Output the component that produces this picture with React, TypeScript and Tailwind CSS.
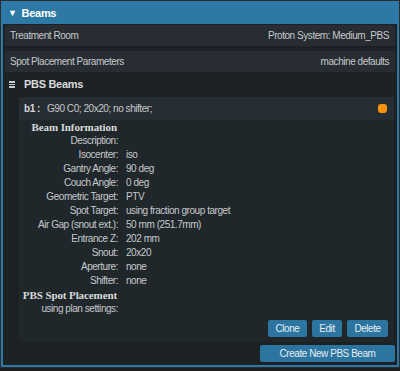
import React from "react";

const rows: [string, string][] = [
  ["Description:", ""],
  ["Isocenter:", "iso"],
  ["Gantry Angle:", "90 deg"],
  ["Couch Angle:", "0 deg"],
  ["Geometric Target:", "PTV"],
  ["Spot Target:", "using fraction group target"],
  ["Air Gap (snout ext.):", "50 mm (251.7mm)"],
  ["Entrance Z:", "202 mm"],
  ["Snout:", "20x20"],
  ["Aperture:", "none"],
  ["Shifter:", "none"],
];

const serif = { fontFamily: '"Liberation Serif", "Times New Roman", serif' };

function Heading({ children }: { children: React.ReactNode }) {
  return (
    <div className="w-[87px] flex justify-end h-[14px] leading-[14px]">
      <span
        className="whitespace-nowrap font-bold text-[11px] tracking-[-0.1px] text-[#d8dadb]"
        style={serif}
      >
        {children}
      </span>
    </div>
  );
}

export default function App() {
  return (
    <div
      className="w-[400px] h-[371px] bg-[#1c1e20] text-[10px] tracking-[-0.45px] text-[#c6c9cb]"
      style={{ fontFamily: '"Liberation Sans", Arial, sans-serif' }}
    >
      <div className="w-[400px] h-[368px] border border-[#2a2d30]">
        <div className="h-full border-2 border-[#2c79a6] bg-[#1e2124] flex flex-col">
          <div className="h-[21px] bg-[#2c79a6] flex items-center pl-[5px] text-white font-bold text-[11px] tracking-[-0.3px] shrink-0">
            <span className="text-[9px] mr-[5px]">▼</span>Beams
          </div>
          <div className="px-[2px] pt-[1px] flex flex-col gap-[5px]">
            <div className="h-[21px] bg-[#272d32] rounded-[2px] flex items-center justify-between pl-[5px] pr-[6px]">
              <span>Treatment Room</span>
              <span>Proton System: Medium_PBS</span>
            </div>
            <div className="h-[21px] bg-[#272d32] rounded-[2px] flex items-center justify-between pl-[5px] pr-[6px]">
              <span>Spot Placement Parameters</span>
              <span>machine defaults</span>
            </div>
          </div>
          <div className="flex items-center h-[25px] pl-[6px] text-[11px] tracking-[-0.3px] font-bold text-[#d8dadb]">
            <span className="flex flex-col gap-[1px] mr-[9px]">
              <span className="block w-[6px] h-[2px] bg-[#c9cbcc]" />
              <span className="block w-[6px] h-[1px] bg-[#c9cbcc]" />
              <span className="block w-[6px] h-[2px] bg-[#c9cbcc]" />
            </span>
            PBS Beams
          </div>
          <div className="ml-[16px] mr-[3px] bg-[#20272b] flex flex-col">
            <div className="h-[23px] bg-[#262d33] flex items-center pl-[5px] pr-[7px]">
              <span className="font-bold text-[#d8dadb] mr-[7px]">b1 :</span>
              <span>G90 C0; 20x20; no shifter;</span>
              <span className="ml-auto w-[9px] h-[9px] rounded-[3px] bg-[#f7940d]" />
            </div>
            <div className="pl-[11px] flex flex-col">
              <Heading>Beam Information</Heading>
              {rows.map(([k, v]) => (
                <div key={k} className="flex h-[14px] leading-[14px]">
                  <span className="w-[88px] text-right">{k}</span>
                  <span className="ml-[8px]">{v}</span>
                </div>
              ))}
              <Heading>PBS Spot Placement</Heading>
              <div className="flex h-[14px] leading-[14px]">
                <span className="w-[88px] text-right">using plan settings:</span>
              </div>
            </div>
            <div className="flex justify-end gap-[5px] pr-[6px] pt-[4px] pb-[5px]">
              <button className="h-[17px] w-[39px] bg-[#2b75a0] rounded-[2px] text-[#e6edf2]">Clone</button>
              <button className="h-[17px] w-[30px] bg-[#2b75a0] rounded-[2px] text-[#e6edf2]">Edit</button>
              <button className="h-[17px] w-[41px] bg-[#2b75a0] rounded-[2px] text-[#e6edf2]">Delete</button>
            </div>
          </div>
          <div className="flex justify-end pr-[2px] mt-[3px]">
            <button className="h-[17px] w-[135px] bg-[#2b75a0] rounded-[2px] text-[#e6edf2]">Create New PBS Beam</button>
          </div>
        </div>
      </div>
    </div>
  );
}
